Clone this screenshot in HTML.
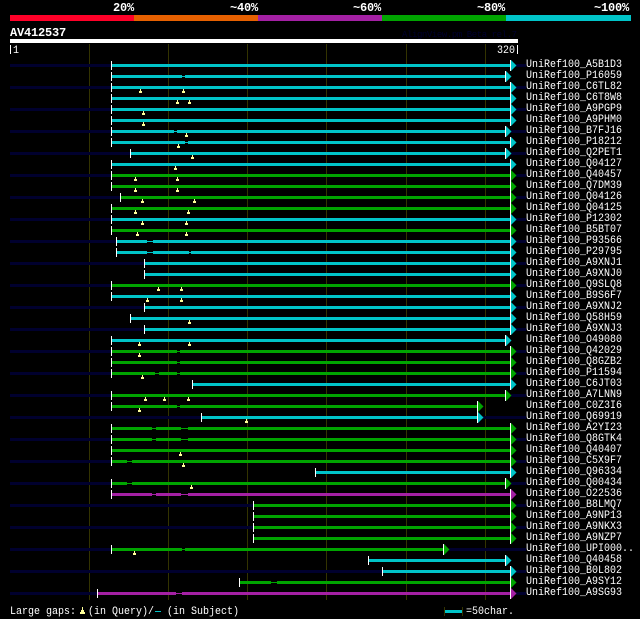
<!DOCTYPE html>
<html><head><meta charset="utf-8"><style>
html,body{margin:0;padding:0;background:#000;width:640px;height:619px;overflow:hidden}
svg{display:block}
path,rect{shape-rendering:crispEdges}
text{font-family:"Liberation Mono",monospace;font-size:11.5px;fill:#fff}
.l{transform:translate(526px,3px) scaleX(.87)}
.b{font-weight:bold;font-size:12px;letter-spacing:-.2px}
.c{fill:#00c4c8}.g{fill:#00a400}.p{fill:#a420a4}
.d{fill:#00002e}
</style></head><body>
<svg width="640" height="619" viewBox="0 0 640 619" xmlns="http://www.w3.org/2000/svg">
<defs>
<g id="t"><rect x="0" y="-3" width="1" height="9" fill="#fff"/></g>
<g id="a"><polygon points="1,-4 6.5,1.5 1,7"/><rect x="0" y="-4" width="1" height="11" fill="#fff"/></g>
<g id="m" fill="#ffff99"><rect x="1" y="3" width="1" height="2"/><rect x="0" y="5" width="3" height="2"/></g>
</defs>
<rect x="10" y="15" width="124" height="6" fill="#ff0028"/>
<rect x="134" y="15" width="124" height="6" fill="#e66000"/>
<rect x="258" y="15" width="124" height="6" fill="#a420a4"/>
<rect x="382" y="15" width="124" height="6" fill="#00a400"/>
<rect x="506" y="15" width="125" height="6" fill="#00c4c8"/>
<text class="b" x="113" y="11">20%</text>
<text class="b" x="230" y="11">~40%</text>
<text class="b" x="353" y="11">~60%</text>
<text class="b" x="477" y="11">~80%</text>
<text class="b" x="594" y="11">~100%</text>
<text class="b" x="10" y="36">AV412537</text>
<text x="402" y="37" style="font-size:9px;fill:#00002e" textLength="115">AlignView.pm Beta rel.7</text>
<rect x="10" y="39" width="508" height="4" fill="#fff"/>
<rect x="10" y="45" width="1" height="9" fill="#fff"/>
<text transform="translate(13,53) scale(.87,1)">1</text>
<text transform="translate(497,53) scale(.87,1)">320</text>
<rect x="517" y="45" width="1" height="9" fill="#fff"/>
<g fill="#333300"><rect x="89" y="44" width="1" height="556"/><rect x="168" y="44" width="1" height="556"/><rect x="247" y="44" width="1" height="556"/><rect x="326" y="44" width="1" height="556"/><rect x="406" y="44" width="1" height="556"/><rect x="485" y="44" width="1" height="556"/></g>

<g transform="translate(0,64)" class="c"><path class="d" d="M10 0H111V3H10zM516 0H526V3H516z"/><path d="M112 0H510V3H112z"/><use href="#t" x="111"/><use href="#a" x="510"/><text class="l">UniRef100_A5B1D3</text></g>
<g transform="translate(0,75)" class="c"><path d="M112 0H182V3H112zM182 1H185V2H182zM185 0H505V3H185z"/><use href="#t" x="111"/><use href="#a" x="505"/><text class="l">UniRef100_P16059</text></g>
<g transform="translate(0,86)" class="c"><path class="d" d="M10 0H111V3H10zM516 0H526V3H516z"/><path d="M112 0H510V3H112z"/><use href="#t" x="111"/><use href="#a" x="510"/><use href="#m" x="139"/><use href="#m" x="182"/><text class="l">UniRef100_C6TL82</text></g>
<g transform="translate(0,97)" class="c"><path d="M112 0H510V3H112z"/><use href="#t" x="111"/><use href="#a" x="510"/><use href="#m" x="176"/><use href="#m" x="188"/><text class="l">UniRef100_C6T8W8</text></g>
<g transform="translate(0,108)" class="c"><path class="d" d="M10 0H111V3H10zM516 0H526V3H516z"/><path d="M112 0H510V3H112z"/><use href="#t" x="111"/><use href="#a" x="510"/><use href="#m" x="142"/><text class="l">UniRef100_A9PGP9</text></g>
<g transform="translate(0,119)" class="c"><path d="M112 0H510V3H112z"/><use href="#t" x="111"/><use href="#a" x="510"/><use href="#m" x="142"/><text class="l">UniRef100_A9PHM0</text></g>
<g transform="translate(0,130)" class="c"><path class="d" d="M10 0H111V3H10zM511 0H526V3H511z"/><path d="M112 0H174V3H112zM174 1H177V2H174zM177 0H505V3H177z"/><use href="#t" x="111"/><use href="#a" x="505"/><use href="#m" x="185"/><text class="l">UniRef100_B7FJ16</text></g>
<g transform="translate(0,141)" class="c"><path d="M112 0H185V3H112zM185 1H188V2H185zM188 0H510V3H188z"/><use href="#t" x="111"/><use href="#a" x="510"/><use href="#m" x="177"/><text class="l">UniRef100_P18212</text></g>
<g transform="translate(0,152)" class="c"><path class="d" d="M10 0H130V3H10zM511 0H526V3H511z"/><path d="M131 0H505V3H131z"/><use href="#t" x="130"/><use href="#a" x="505"/><use href="#m" x="191"/><text class="l">UniRef100_Q2PET1</text></g>
<g transform="translate(0,163)" class="c"><path d="M112 0H510V3H112z"/><use href="#t" x="111"/><use href="#a" x="510"/><use href="#m" x="174"/><text class="l">UniRef100_Q04127</text></g>
<g transform="translate(0,174)" class="g"><path class="d" d="M10 0H111V3H10zM516 0H526V3H516z"/><path d="M112 0H510V3H112z"/><use href="#t" x="111"/><use href="#a" x="510"/><use href="#m" x="134"/><use href="#m" x="176"/><text class="l">UniRef100_Q40457</text></g>
<g transform="translate(0,185)" class="g"><path d="M112 0H510V3H112z"/><use href="#t" x="111"/><use href="#a" x="510"/><use href="#m" x="134"/><use href="#m" x="176"/><text class="l">UniRef100_Q7DM39</text></g>
<g transform="translate(0,196)" class="g"><path class="d" d="M10 0H120V3H10zM516 0H526V3H516z"/><path d="M121 0H510V3H121z"/><use href="#t" x="120"/><use href="#a" x="510"/><use href="#m" x="141"/><use href="#m" x="193"/><text class="l">UniRef100_Q04126</text></g>
<g transform="translate(0,207)" class="g"><path d="M112 0H510V3H112z"/><use href="#t" x="111"/><use href="#a" x="510"/><use href="#m" x="134"/><use href="#m" x="187"/><text class="l">UniRef100_Q04125</text></g>
<g transform="translate(0,218)" class="c"><path class="d" d="M10 0H111V3H10zM516 0H526V3H516z"/><path d="M112 0H510V3H112z"/><use href="#t" x="111"/><use href="#a" x="510"/><use href="#m" x="141"/><use href="#m" x="185"/><text class="l">UniRef100_P12302</text></g>
<g transform="translate(0,229)" class="g"><path d="M112 0H510V3H112z"/><use href="#t" x="111"/><use href="#a" x="510"/><use href="#m" x="136"/><use href="#m" x="185"/><text class="l">UniRef100_B5BT07</text></g>
<g transform="translate(0,240)" class="c"><path class="d" d="M10 0H116V3H10zM516 0H526V3H516z"/><path d="M117 0H147V3H117zM147 1H153V2H147zM153 0H510V3H153z"/><use href="#t" x="116"/><use href="#a" x="510"/><text class="l">UniRef100_P93566</text></g>
<g transform="translate(0,251)" class="c"><path d="M117 0H147V3H117zM147 1H153V2H147zM153 0H189V3H153zM189 1H191V2H189zM191 0H510V3H191z"/><use href="#t" x="116"/><use href="#a" x="510"/><text class="l">UniRef100_P29795</text></g>
<g transform="translate(0,262)" class="c"><path class="d" d="M10 0H144V3H10zM516 0H526V3H516z"/><path d="M145 0H510V3H145z"/><use href="#t" x="144"/><use href="#a" x="510"/><text class="l">UniRef100_A9XNJ1</text></g>
<g transform="translate(0,273)" class="c"><path d="M145 0H510V3H145z"/><use href="#t" x="144"/><use href="#a" x="510"/><text class="l">UniRef100_A9XNJ0</text></g>
<g transform="translate(0,284)" class="g"><path class="d" d="M10 0H111V3H10zM516 0H526V3H516z"/><path d="M112 0H510V3H112z"/><use href="#t" x="111"/><use href="#a" x="510"/><use href="#m" x="157"/><use href="#m" x="180"/><text class="l">UniRef100_Q9SLQ8</text></g>
<g transform="translate(0,295)" class="c"><path d="M112 0H510V3H112z"/><use href="#t" x="111"/><use href="#a" x="510"/><use href="#m" x="146"/><use href="#m" x="180"/><text class="l">UniRef100_B9S6F7</text></g>
<g transform="translate(0,306)" class="c"><path class="d" d="M10 0H144V3H10zM516 0H526V3H516z"/><path d="M145 0H510V3H145z"/><use href="#t" x="144"/><use href="#a" x="510"/><text class="l">UniRef100_A9XNJ2</text></g>
<g transform="translate(0,317)" class="c"><path d="M131 0H510V3H131z"/><use href="#t" x="130"/><use href="#a" x="510"/><use href="#m" x="188"/><text class="l">UniRef100_Q58H59</text></g>
<g transform="translate(0,328)" class="c"><path class="d" d="M10 0H144V3H10zM516 0H526V3H516z"/><path d="M145 0H510V3H145z"/><use href="#t" x="144"/><use href="#a" x="510"/><text class="l">UniRef100_A9XNJ3</text></g>
<g transform="translate(0,339)" class="c"><path d="M112 0H505V3H112z"/><use href="#t" x="111"/><use href="#a" x="505"/><use href="#m" x="138"/><use href="#m" x="188"/><text class="l">UniRef100_O49080</text></g>
<g transform="translate(0,350)" class="g"><path class="d" d="M10 0H111V3H10zM516 0H526V3H516z"/><path d="M112 0H177V3H112zM177 1H180V2H177zM180 0H510V3H180z"/><use href="#t" x="111"/><use href="#a" x="510"/><use href="#m" x="138"/><text class="l">UniRef100_Q42029</text></g>
<g transform="translate(0,361)" class="g"><path d="M112 0H177V3H112zM177 1H180V2H177zM180 0H510V3H180z"/><use href="#t" x="111"/><use href="#a" x="510"/><text class="l">UniRef100_Q8GZB2</text></g>
<g transform="translate(0,372)" class="g"><path class="d" d="M10 0H111V3H10zM516 0H526V3H516z"/><path d="M112 0H155V3H112zM155 1H159V2H155zM159 0H177V3H159zM177 1H180V2H177zM180 0H510V3H180z"/><use href="#t" x="111"/><use href="#a" x="510"/><use href="#m" x="141"/><text class="l">UniRef100_P11594</text></g>
<g transform="translate(0,383)" class="c"><path d="M193 0H510V3H193z"/><use href="#t" x="192"/><use href="#a" x="510"/><text class="l">UniRef100_C6JT03</text></g>
<g transform="translate(0,394)" class="g"><path class="d" d="M10 0H111V3H10zM511 0H526V3H511z"/><path d="M112 0H505V3H112z"/><use href="#t" x="111"/><use href="#a" x="505"/><use href="#m" x="144"/><use href="#m" x="163"/><use href="#m" x="187"/><text class="l">UniRef100_A7LNN9</text></g>
<g transform="translate(0,405)" class="g"><path d="M112 0H177V3H112zM177 1H180V2H177zM180 0H477V3H180z"/><use href="#t" x="111"/><use href="#a" x="477"/><use href="#m" x="138"/><text class="l">UniRef100_C0Z3I6</text></g>
<g transform="translate(0,416)" class="c"><path class="d" d="M10 0H201V3H10zM483 0H526V3H483z"/><path d="M202 0H477V3H202z"/><use href="#t" x="201"/><use href="#a" x="477"/><use href="#m" x="245"/><text class="l">UniRef100_Q69919</text></g>
<g transform="translate(0,427)" class="g"><path d="M112 0H152V3H112zM152 1H156V2H152zM156 0H181V3H156zM181 1H188V2H181zM188 0H510V3H188z"/><use href="#t" x="111"/><use href="#a" x="510"/><text class="l">UniRef100_A2YI23</text></g>
<g transform="translate(0,438)" class="g"><path class="d" d="M10 0H111V3H10zM516 0H526V3H516z"/><path d="M112 0H152V3H112zM152 1H156V2H152zM156 0H181V3H156zM181 1H188V2H181zM188 0H510V3H188z"/><use href="#t" x="111"/><use href="#a" x="510"/><text class="l">UniRef100_Q8GTK4</text></g>
<g transform="translate(0,449)" class="g"><path d="M112 0H510V3H112z"/><use href="#t" x="111"/><use href="#a" x="510"/><use href="#m" x="179"/><text class="l">UniRef100_Q40407</text></g>
<g transform="translate(0,460)" class="g"><path class="d" d="M10 0H111V3H10zM516 0H526V3H516z"/><path d="M112 0H127V3H112zM127 1H132V2H127zM132 0H510V3H132z"/><use href="#t" x="111"/><use href="#a" x="510"/><use href="#m" x="182"/><text class="l">UniRef100_C5X9F7</text></g>
<g transform="translate(0,471)" class="c"><path d="M316 0H510V3H316z"/><use href="#t" x="315"/><use href="#a" x="510"/><text class="l">UniRef100_Q96334</text></g>
<g transform="translate(0,482)" class="g"><path class="d" d="M10 0H111V3H10zM511 0H526V3H511z"/><path d="M112 0H127V3H112zM127 1H132V2H127zM132 0H505V3H132z"/><use href="#t" x="111"/><use href="#a" x="505"/><use href="#m" x="190"/><text class="l">UniRef100_Q00434</text></g>
<g transform="translate(0,493)" class="p"><path d="M112 0H152V3H112zM152 1H156V2H152zM156 0H181V3H156zM181 1H188V2H181zM188 0H510V3H188z"/><use href="#t" x="111"/><use href="#a" x="510"/><text class="l">UniRef100_O22536</text></g>
<g transform="translate(0,504)" class="g"><path class="d" d="M10 0H253V3H10zM516 0H526V3H516z"/><path d="M254 0H510V3H254z"/><use href="#t" x="253"/><use href="#a" x="510"/><text class="l">UniRef100_B8LMQ7</text></g>
<g transform="translate(0,515)" class="g"><path d="M254 0H510V3H254z"/><use href="#t" x="253"/><use href="#a" x="510"/><text class="l">UniRef100_A9NP13</text></g>
<g transform="translate(0,526)" class="g"><path class="d" d="M10 0H253V3H10zM516 0H526V3H516z"/><path d="M254 0H510V3H254z"/><use href="#t" x="253"/><use href="#a" x="510"/><text class="l">UniRef100_A9NKX3</text></g>
<g transform="translate(0,537)" class="g"><path d="M254 0H510V3H254z"/><use href="#t" x="253"/><use href="#a" x="510"/><text class="l">UniRef100_A9NZP7</text></g>
<g transform="translate(0,548)" class="g"><path class="d" d="M10 0H111V3H10zM449 0H526V3H449z"/><path d="M112 0H182V3H112zM182 1H185V2H182zM185 0H443V3H185z"/><use href="#t" x="111"/><use href="#a" x="443"/><use href="#m" x="133"/><text class="l">UniRef100_UPI000..</text></g>
<g transform="translate(0,559)" class="c"><path d="M369 0H505V3H369z"/><use href="#t" x="368"/><use href="#a" x="505"/><text class="l">UniRef100_Q40458</text></g>
<g transform="translate(0,570)" class="c"><path class="d" d="M10 0H382V3H10zM516 0H526V3H516z"/><path d="M383 0H510V3H383z"/><use href="#t" x="382"/><use href="#a" x="510"/><text class="l">UniRef100_B0L802</text></g>
<g transform="translate(0,581)" class="g"><path d="M240 0H271V3H240zM271 1H277V2H271zM277 0H510V3H277z"/><use href="#t" x="239"/><use href="#a" x="510"/><text class="l">UniRef100_A9SY12</text></g>
<g transform="translate(0,592)" class="p"><path class="d" d="M10 0H97V3H10zM516 0H526V3H516z"/><path d="M98 0H176V3H98zM176 1H182V2H176zM182 0H510V3H182z"/><use href="#t" x="97"/><use href="#a" x="510"/><text class="l">UniRef100_A9SG93</text></g>

<text transform="translate(10,614) scale(.87,1)">Large gaps:</text>
<rect x="82" y="607" width="1" height="3" fill="#ffff99"/><rect x="81" y="610" width="3" height="2" fill="#ffff99"/><rect x="80" y="612" width="5" height="2" fill="#ffff99"/>
<text transform="translate(88,614) scale(.87,1)">(in Query)/</text>
<rect x="155" y="611" width="6" height="1" fill="#00c4c8"/>
<text transform="translate(167,614) scale(.87,1)">(in Subject)</text>
<rect x="444" y="607" width="1" height="9" fill="#333300"/>
<rect x="462" y="607" width="1" height="9" fill="#333300"/>
<rect x="445" y="610" width="17" height="3" fill="#00c4c8"/>
<text transform="translate(466,614) scale(.87,1)">=50char.</text>
</svg>
</body></html>
